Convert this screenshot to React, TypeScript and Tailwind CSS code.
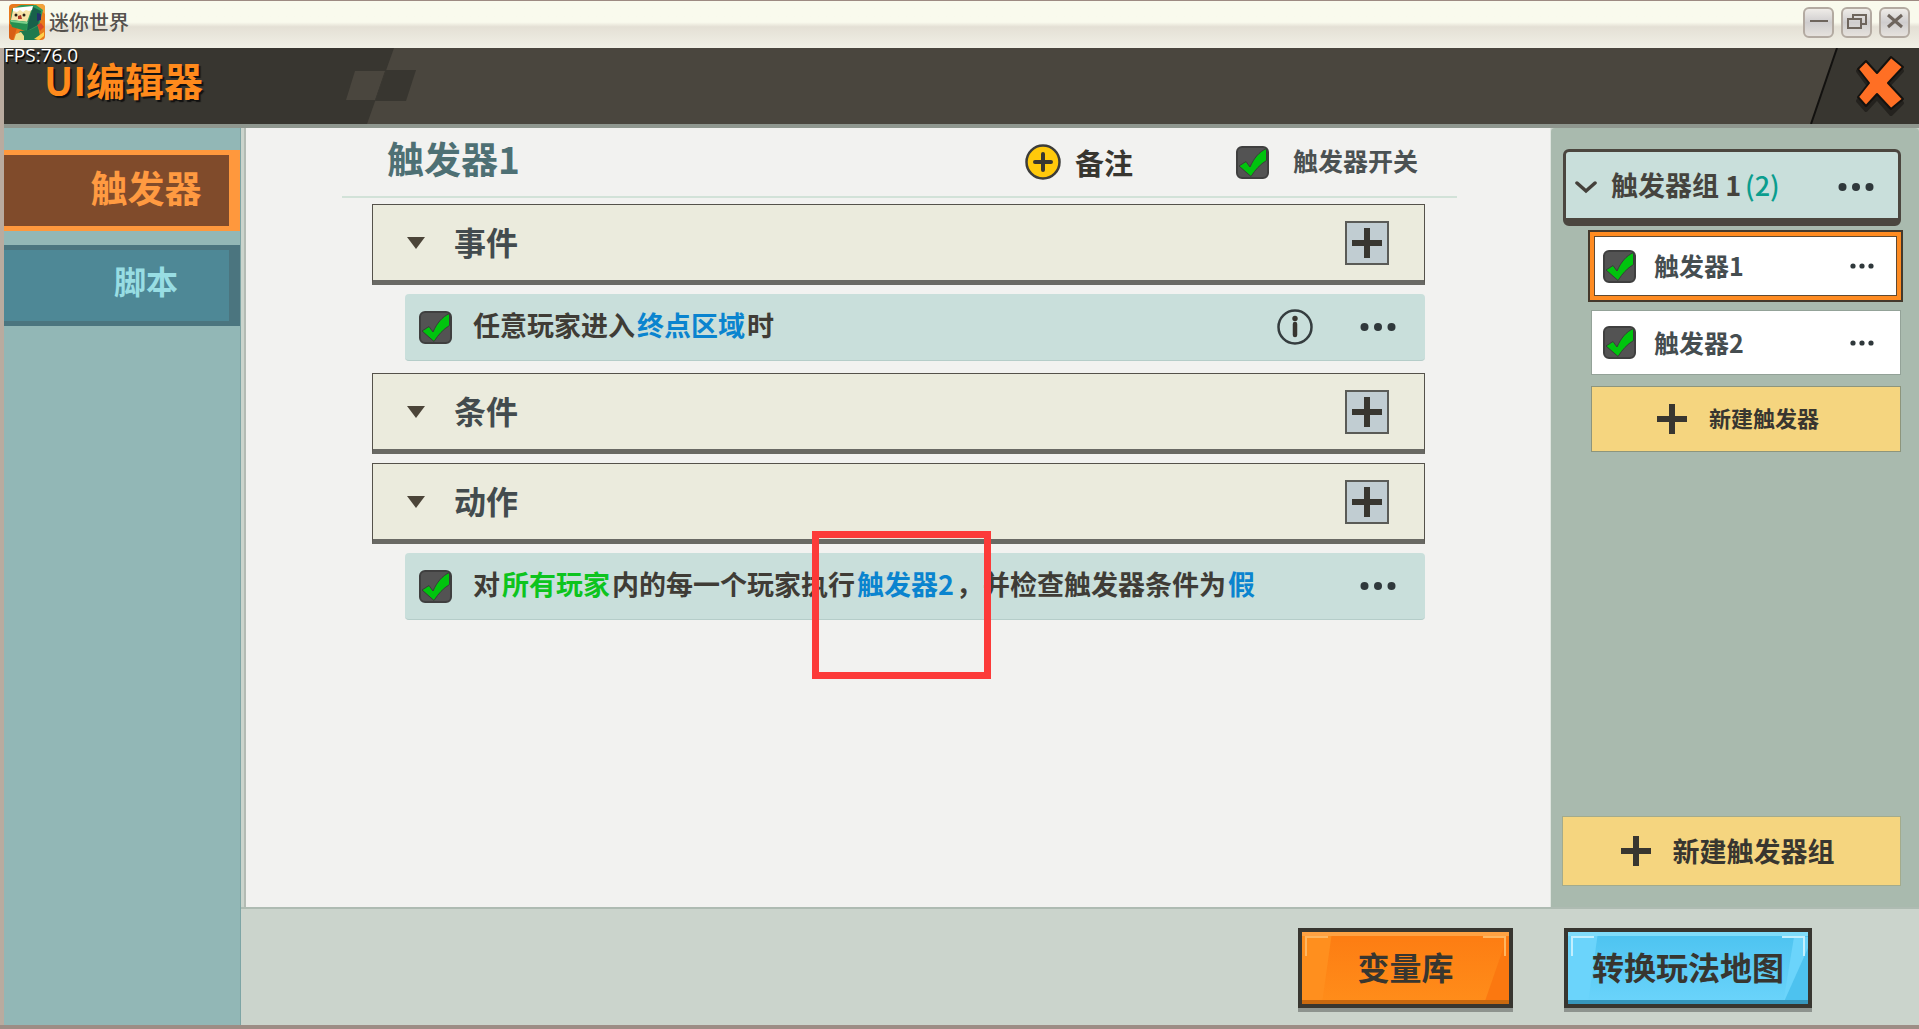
import { useState } from "react";
import type { ReactNode } from "react";

function PlusIcon({ size = 30 }: { size?: number }) {
  return (
    <svg width={size} height={size} viewBox="0 0 30 30" aria-hidden="true">
      <path d="M12 0h6v12h12v6H18v12h-6V18H0v-6h12z" fill="#383630" />
    </svg>
  );
}

function Dots({ small = false }: { small?: boolean }) {
  return small ? (
    <svg width="24" height="8" viewBox="0 0 24 8" aria-hidden="true">
      <circle cx="3" cy="4" r="2.6" fill="#2f383b" />
      <circle cx="12" cy="4" r="2.6" fill="#2f383b" />
      <circle cx="21" cy="4" r="2.6" fill="#2f383b" />
    </svg>
  ) : (
    <svg width="36" height="10" viewBox="0 0 36 10" aria-hidden="true">
      <circle cx="4.5" cy="5" r="4" fill="#2f383b" />
      <circle cx="18" cy="5" r="4" fill="#2f383b" />
      <circle cx="31.5" cy="5" r="4" fill="#2f383b" />
    </svg>
  );
}

function MoreButton({ small = false }: { small?: boolean }) {
  return (
    <button aria-label="更多" className="shrink-0">
      <Dots small={small} />
    </button>
  );
}

function Checkbox({ id }: { id: string }) {
  const [checked, setChecked] = useState(true);
  return (
    <span className="grid h-[33px] w-[33px] shrink-0">
      <input
        id={id}
        type="checkbox"
        checked={checked}
        onChange={(e) => setChecked(e.target.checked)}
        className="col-start-1 row-start-1 h-full w-full appearance-none rounded-md border-2 border-[#3f3f3f] bg-[#535353]"
      />
      {checked && (
        <svg
          viewBox="0 0 33 33"
          className="pointer-events-none col-start-1 row-start-1 h-full w-full"
          aria-hidden="true"
        >
          <path
            d="M3 20l7-4.500 4 5.500C18 12 23 6 30.500 2.500v12c-6.500 4-11 9-15.500 16z"
            fill="#00c40e"
            stroke="#3b3b3b"
            strokeWidth="1"
          />
        </svg>
      )}
    </span>
  );
}

function GameLogo() {
  return (
    <svg width="36" height="36" viewBox="0 0 36 36" aria-hidden="true">
      <defs>
        <clipPath id="logo-clip">
          <rect width="36" height="36" rx="4" />
        </clipPath>
      </defs>
      <g clipPath="url(#logo-clip)">
        <rect width="36" height="36" fill="#e8791c" />
        <path d="M24 0h12v10z" fill="#f2a33c" />
        <path d="M0 20l8 4-4 12H0z" fill="#d85f14" />
        <path d="M3 5l9-4h15l7 5-4 16-11 6L1 20z" fill="#2f9a5b" />
        <path d="M24 3l8 4-3 14-11 6 1-8z" fill="#17614a" />
        <path d="M4 6l19-2-5 14-16-2z" fill="#f6e3a8" />
        <path d="M4 4l20-2-1 4-3 1-3-1-3 2-3-2-3 2-4-1z" fill="#fff" />
        <path d="M1 16l18 2-2 9-14-4z" fill="#259050" />
        <path d="M1 16l18 2-1 2-16-2z" fill="#7ad08c" />
        <circle cx="7" cy="11" r="1.500" fill="#2b2118" />
        <circle cx="15" cy="11" r="1.500" fill="#2b2118" />
        <path d="M9 12l3-1 1 4H9z" fill="#b23a24" />
        <path d="M28 9l4 1v6l-4 1z" fill="#23306a" />
        <path d="M6 36l5-9 10-1 8-4 2 10-4 4z" fill="#1e7a4e" />
        <path d="M5 36l2-6 5-2 3 4v4z" fill="#efe08f" />
        <path d="M28 21l4-2 3 4-4 4z" fill="#d8472a" />
        <path d="M25 35l10-7v4l-5 4z" fill="#ffd04a" />
      </g>
    </svg>
  );
}

function WindowButton({ label, children }: { label: string; children: ReactNode }) {
  return (
    <button
      aria-label={label}
      className="flex h-[31px] w-[31px] items-center justify-center rounded-md border-2 border-[#b3aaa1] bg-linear-to-b from-[#efece8] via-[#cfcdce] to-[#e6e2dd]"
    >
      <svg width="20" height="20" viewBox="0 0 20 20" fill="none" stroke="#6e655d" aria-hidden="true">
        {children}
      </svg>
    </button>
  );
}

function TitleBar() {
  return (
    <div className="flex h-12 items-center border-t border-[#9d8a82] bg-linear-to-b from-[#f9faed] from-45% via-[#e4e0d5] via-55% to-[#f1f0e6] pr-[9px] pb-[5px] pl-[9px]">
      <GameLogo />
      <span className="ml-1 text-[20px] leading-6 font-medium text-[#55514d]">迷你世界</span>
      <div className="ml-auto flex gap-[7px]">
        <WindowButton label="最小化">
          <path d="M1 9h18" strokeWidth="2" />
        </WindowButton>
        <WindowButton label="还原">
          <path d="M1 7h13v9H1zM6 7V3h13v9h-5" strokeWidth="2" />
        </WindowButton>
        <WindowButton label="关闭">
          <path d="M3 3l14 12M17 3L3 15" strokeWidth="3" />
        </WindowButton>
      </div>
    </div>
  );
}

function Header() {
  return (
    <header className="relative flex h-20 justify-between border-b-4 border-[#8f978f] bg-[#4a463e]">
      <svg className="absolute top-0 left-0" width="420" height="76" viewBox="0 0 420 76" aria-hidden="true">
        <path d="M0 0h390l-27 76H0z" fill="#383630" />
        <path d="M351 23h30l-10 29h-29z" fill="#4a463e" />
        <path d="M382 22h30l-10 31h-31z" fill="#383630" />
      </svg>
      <span className="absolute top-[-3px] left-0 font-['Open_Sans'] text-[19px] leading-5 font-medium text-white [text-shadow:1px_2px_1px_#000]">
        FPS:76.0
      </span>
      <h1 className="relative pt-2 pl-[40px] text-[39px] leading-[46px] font-bold text-[#ff8a1c] [text-shadow:2px_2px_1px_#111]">
        UI编辑器
      </h1>
      <button aria-label="关闭编辑器" className="relative">
        <svg width="110" height="76" viewBox="0 0 110 76" aria-hidden="true">
          <path d="M28 0h82v76H2z" fill="#383630" />
          <path d="M28 0L2 76" stroke="#12110f" strokeWidth="2" />
          <path
            d="M57 15l11 13 14-16 11 11-14 15 14 17-11 11-14-16-11 12-8-9 11-15-11-15z"
            fill="#24221e"
            stroke="#24221e"
            strokeWidth="4"
            strokeLinejoin="round"
          />
          <path
            d="M57 13l11 12 14-16 12 10-15 16 15 16-12 10-14-15-11 12-8-9 11-14-11-14z"
            fill="#ff6f24"
            stroke="#14120f"
            strokeWidth="2"
            strokeLinejoin="round"
          />
        </svg>
      </button>
    </header>
  );
}

function Sidebar() {
  return (
    <nav className="flex w-[237px] shrink-0 flex-col gap-[14px] border-r border-[#7da5a5] bg-[#92b7b6] pt-[22px]">
      <button className="h-[81px] border-y-5 border-r-11 border-[#ff983d] bg-[#804b2b] pb-2 pl-[59px] text-[37px] leading-10 font-bold text-[#ff9a41]">
        触发器
      </button>
      <button className="h-[81px] border-y-5 border-r-11 border-[#4b757f] bg-[#4e8896] pb-3 pl-[59px] text-[32px] leading-10 font-bold text-[#98dde3]">
        脚本
      </button>
    </nav>
  );
}

function Section({ title }: { title: string }) {
  return (
    <div className="flex h-[81px] items-center border border-b-5 border-[#55524b] border-b-[#696964] bg-[#ebebdd] pr-[35px] pl-[34px]">
      <svg width="18" height="12" viewBox="0 0 18 12" aria-hidden="true">
        <path d="M0 0h18L9 12z" fill="#4b4438" />
      </svg>
      <h3 className="ml-[29px] pb-1 text-[32px] leading-10 font-bold text-[#434b4e]">{title}</h3>
      <button
        aria-label={`添加${title}`}
        className="ml-auto flex h-11 w-11 items-center justify-center border-2 border-[#5a5b57] bg-[#c1cdd2]"
      >
        <PlusIcon />
      </button>
    </div>
  );
}

function Param({ children, target }: { children: ReactNode; target?: boolean }) {
  return <span className={target ? "mx-[2px] text-[#0dc41e]" : "mx-[2px] text-[#0a84cf]"}>{children}</span>;
}

function Row({
  id,
  info,
  marked,
  children,
}: {
  id: string;
  info?: boolean;
  marked?: boolean;
  children: ReactNode;
}) {
  return (
    <div className="relative ml-[33px] flex h-[67px] items-center rounded border-b border-[#b5cdc9] bg-[#c9dfdb] pr-[29px] pl-[14px]">
      <Checkbox id={id} />
      <label htmlFor={id} className="ml-[21px] pb-1 text-[27px] leading-8 font-bold whitespace-nowrap text-[#3f3c36]">
        {children}
      </label>
      <div className="ml-auto flex items-center gap-[47px]">
        {info && (
          <button aria-label="说明">
            <svg width="36" height="36" viewBox="0 0 36 36" aria-hidden="true">
              <circle cx="18" cy="18" r="16.500" fill="none" stroke="#353d3f" strokeWidth="2.500" />
              <circle cx="18" cy="9.500" r="2.700" fill="#383630" />
              <path d="M18 15v11" stroke="#383630" strokeWidth="4.500" strokeLinecap="round" />
            </svg>
          </button>
        )}
        <MoreButton />
      </div>
      {marked && (
        <div className="pointer-events-none absolute top-[-22px] left-[407px] h-[148px] w-[179px] border-7 border-[#fc3a39]" />
      )}
    </div>
  );
}

function TriggerDetail() {
  return (
    <main className="min-w-0 flex-1 border-r border-[#dfe5df] bg-[#f2f2f0]">
      <div className="mr-[93px] ml-[96px] flex h-[70px] items-center border-b-2 border-[#d2e2d8] pr-[39px] pb-2 pl-[45px]">
        <h2 className="text-[37px] leading-[52px] font-bold text-[#4e7074]">触发器1</h2>
        <div className="mt-2 ml-auto flex items-center">
          <button className="flex items-center gap-[14px] text-[29px] leading-9 font-bold text-[#383630]">
            <svg width="36" height="36" viewBox="0 0 36 36" aria-hidden="true">
              <circle cx="18" cy="18" r="16.500" fill="#ffc90b" stroke="#3d3d3a" strokeWidth="2.500" />
              <path d="M18 10v16M10 18h16" stroke="#383630" strokeWidth="4" strokeLinecap="round" />
            </svg>
            备注
          </button>
          <div className="ml-[103px] flex items-center gap-6">
            <Checkbox id="trigger-switch" />
            <label htmlFor="trigger-switch" className="pb-1 text-[25px] leading-8 font-bold text-[#4b5152]">
              触发器开关
            </label>
          </div>
        </div>
      </div>
      <div className="mt-[6px] mr-[125px] ml-[126px] flex flex-col gap-[9px]">
        <Section title="事件" />
        <Row id="event-1" info>
          任意玩家进入<Param>终点区域</Param>时
        </Row>
        <div className="mt-[3px]">
          <Section title="条件" />
        </div>
        <Section title="动作" />
        <Row id="action-1" marked>
          对<Param target>所有玩家</Param>内的每一个玩家执行<Param>触发器2</Param>，并检查触发器条件为
          <Param>假</Param>
        </Row>
      </div>
    </main>
  );
}

function TriggerItem({ id, name, active }: { id: string; name: string; active?: boolean }) {
  const content = (
    <>
      <Checkbox id={id} />
      <label htmlFor={id} className="ml-[18px] pb-[2px] text-[25px] leading-8 font-bold text-[#454d50]">
        {name}
      </label>
      <div className="ml-auto flex">
        <MoreButton small />
      </div>
    </>
  );
  if (active) {
    return (
      <li className="-mr-[2px] -ml-[3px] border-2 border-[#44392c] bg-[#ff8b21] p-1">
        <div className="flex h-[60px] items-center border border-[#5f4a33] bg-white pr-[22px] pl-2">{content}</div>
      </li>
    );
  }
  return (
    <li className="mt-2 flex h-[65px] items-center border border-[#93a298] bg-white pr-[26px] pl-[11px]">{content}</li>
  );
}

function TriggerList() {
  return (
    <aside className="flex w-[368px] shrink-0 flex-col rounded-t bg-[#a9baae] pt-[21px] pr-[18px] pb-[21px] pl-[11px]">
      <div className="ml-px flex h-[77px] items-center rounded-md border-3 border-b-8 border-[#4b463f] bg-[#c9dfdb] pr-[24px] pl-[9px]">
        <button aria-label="折叠触发器组" className="pt-1">
          <svg width="22" height="14" viewBox="0 0 22 14" fill="none" aria-hidden="true">
            <path d="M2 3l9 8 9-8" stroke="#44403a" strokeWidth="3.500" strokeLinecap="round" />
          </svg>
        </button>
        <h3 className="ml-[14px] text-[27px] leading-8 font-bold text-[#45433d]">
          触发器组 1<span className="ml-1 font-medium text-[#0b9d8e]">(2)</span>
        </h3>
        <div className="ml-auto flex pt-1">
          <MoreButton />
        </div>
      </div>
      <ul className="mt-1 ml-[29px]">
        <TriggerItem id="trigger-1" name="触发器1" active />
        <TriggerItem id="trigger-2" name="触发器2" />
      </ul>
      <button className="mt-[11px] ml-[29px] flex h-[66px] items-center justify-center gap-[22px] border border-[#8d957c] bg-[#f5d57f] pr-4 text-[22px] leading-8 font-bold text-[#383630]">
        <PlusIcon />
        <span className="pb-1">新建触发器</span>
      </button>
      <button className="mt-auto flex h-[70px] items-center justify-center gap-[22px] border border-[#a3ab8c] bg-[#f5d57f] pr-2 text-[27px] leading-8 font-bold text-[#383630]">
        <PlusIcon />
        新建触发器组
      </button>
    </aside>
  );
}

function Footer() {
  return (
    <footer className="flex h-[118px] shrink-0 items-start justify-end gap-[51px] border-t-2 border-[#aebbb2] pt-[19px] pr-[107px]">
      <button className="relative h-20 w-[215px] border-4 border-[#383630] bg-linear-to-b from-[#fd7c12] to-[#ff8d1a] pb-1 text-[32px] leading-10 font-bold text-[#383630] shadow-[0_4px_0_#8d938e]">
        <svg className="absolute inset-0 h-full w-full" viewBox="0 0 207 72" preserveAspectRatio="none" aria-hidden="true">
          <path d="M0 0h30L20 72H0z" fill="#ff8f1e" />
          <path d="M207 0v72h-25z" fill="#fb7810" />
          <path d="M0 0h207v4H0z" fill="#ffa243" />
          <path d="M4 24V5h22M203 24V5h-22" fill="none" stroke="#ffb660" strokeWidth="2" />
          <path d="M0 68h207v4H0z" fill="#c9690f" />
        </svg>
        <span className="relative">变量库</span>
      </button>
      <button className="relative h-20 w-[248px] border-4 border-[#383630] bg-linear-to-b from-[#4cc3f0] to-[#6bd4fb] pb-1 text-[32px] leading-10 font-bold text-[#383630] shadow-[0_4px_0_#8d938e]">
        <svg className="absolute inset-0 h-full w-full" viewBox="0 0 240 72" preserveAspectRatio="none" aria-hidden="true">
          <path d="M0 0h30L20 72H0z" fill="#6bd4fb" />
          <path d="M226 5h14v30l-13 37h-12z" fill="#6bd4fb" />
          <path d="M240 16v56h-25z" fill="#4dc2ef" />
          <path d="M0 0h240v4H0z" fill="#80dcfa" />
          <path d="M4 24V5h22M236 24V5h-22" fill="none" stroke="#c2effe" strokeWidth="2" />
          <path d="M0 68h240v4H0z" fill="#3797bd" />
        </svg>
        <span className="relative">转换玩法地图</span>
      </button>
    </footer>
  );
}

export default function App() {
  return (
    <div className="flex min-h-screen flex-col border-b-4 border-[#9d8d85] bg-[#cbd4cc] font-['Noto_Sans_CJK_SC',sans-serif]">
      <TitleBar />
      <div className="flex flex-1 flex-col border-l-4 border-[#b9ab9f]">
        <Header />
        <div className="flex flex-1">
          <Sidebar />
          <div className="flex min-w-0 flex-1 flex-col">
            <div className="ml-[3px] flex flex-1 border-l-2 border-[#b3bbb4]">
              <TriggerDetail />
              <TriggerList />
            </div>
            <Footer />
          </div>
        </div>
      </div>
    </div>
  );
}
